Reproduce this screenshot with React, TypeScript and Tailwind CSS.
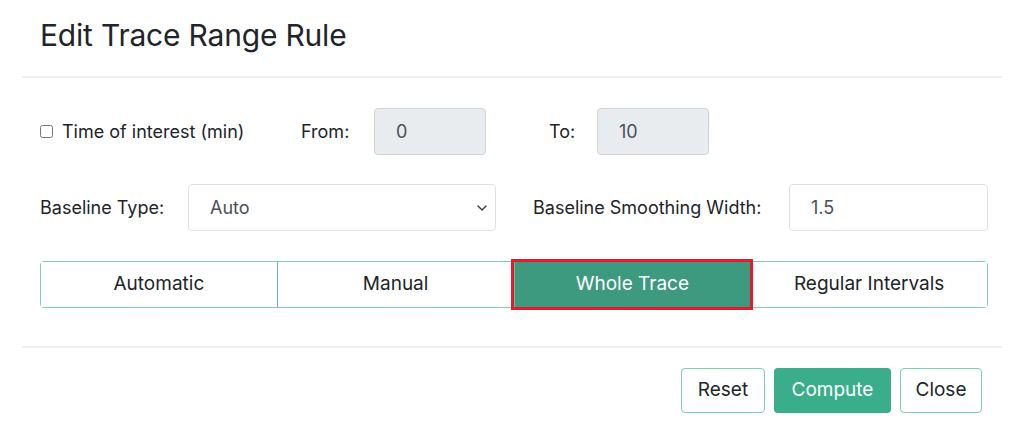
import React, { useState } from 'react';
import { ChevronDown } from 'lucide-react';

const modes = ['Automatic', 'Manual', 'Whole Trace', 'Regular Intervals'];

export default function App() {
  const [mode, setMode] = useState('Whole Trace');
  const [useTime, setUseTime] = useState(false);

  return (
    <div className="w-[1029px] h-[445px] bg-white text-[#212529]" style={{ fontFamily: 'Inter, "Noto Sans", sans-serif' }}>
      {/* header */}
      <div className="h-[76px] pl-[40px] pt-[16px]">
        <h2 className="text-[30px] leading-[38px] font-normal tracking-[-0.2px]">Edit Trace Range Rule</h2>
      </div>
      <div className="ml-[22px] mr-[27px] border-t-2 border-[#eeeeee]" />

      {/* body */}
      <div className="px-[40px] pt-[30px]">
        <div className="flex items-center h-[47px] text-[18px]">
          <label className="flex items-center w-[261px]">
            <input
              type="checkbox"
              checked={useTime}
              onChange={() => setUseTime(!useTime)}
              className="w-[13px] h-[13px] mr-[9px]"
            />
            <span>Time of interest (min)</span>
          </label>
          <span className="w-[73px]">From:</span>
          <input
            readOnly
            value="0"
            className="w-[112px] h-[47px] px-[21px] rounded-[4px] bg-[#e9ecef] border border-[#ced4da] text-[#495057] text-[18px] outline-none"
          />
          <span className="ml-[63px] w-[48px]">To:</span>
          <input
            readOnly
            value="10"
            className="w-[112px] h-[47px] px-[21px] rounded-[4px] bg-[#e9ecef] border border-[#ced4da] text-[#495057] text-[18px] outline-none"
          />
        </div>

        <div className="flex items-center h-[47px] mt-[29px] text-[18px]">
          <span className="w-[148px]">Baseline Type:</span>
          <div className="relative w-[308px] h-[47px] border border-[#dee2e6] rounded-[4px] flex items-center pl-[21px] text-[#495057]">
            Auto
            <ChevronDown className="absolute right-[5px] w-[16px] h-[16px] text-[#343a40]" strokeWidth={2} />
          </div>
          <span className="ml-[37px] w-[256px]">Baseline Smoothing Width:</span>
          <input
            defaultValue="1.5"
            className="w-[199px] h-[47px] px-[21px] rounded-[4px] border border-[#dee2e6] text-[#495057] text-[18px] outline-none"
          />
        </div>

        <div className="flex mt-[30px] w-[948px] h-[47px] border border-[#7dcfb2] rounded-[4px]">
          {modes.map((m, i) => {
            const active = m === mode;
            return (
              <button
                key={m}
                onClick={() => setMode(m)}
                className={
                  'flex-1 flex items-center justify-center text-[19px] ' +
                  (i > 0 ? 'border-l border-[#5dbf9c] ' : '') +
                  (active
                    ? 'bg-[#3d9a7e] text-white outline-[3px] outline-solid outline-[#e8192c] relative z-10'
                    : 'bg-white text-[#212529]')
                }
              >
                {m}
              </button>
            );
          })}
        </div>
      </div>

      <div className="mt-[38px] ml-[22px] mr-[27px] border-t-2 border-[#eeeeee]" />

      {/* footer */}
      <div className="flex justify-end gap-[9px] pr-[47px] pt-[20px] text-[19px]">
        <button className="w-[84px] h-[45px] rounded-[4px] border border-[#7dcfb2] bg-white text-[#212529]">Reset</button>
        <button className="w-[117px] h-[45px] rounded-[4px] bg-[#3aae8a] text-white">Compute</button>
        <button className="w-[82px] h-[45px] rounded-[4px] border border-[#7dcfb2] bg-white text-[#212529]">Close</button>
      </div>
    </div>
  );
}
